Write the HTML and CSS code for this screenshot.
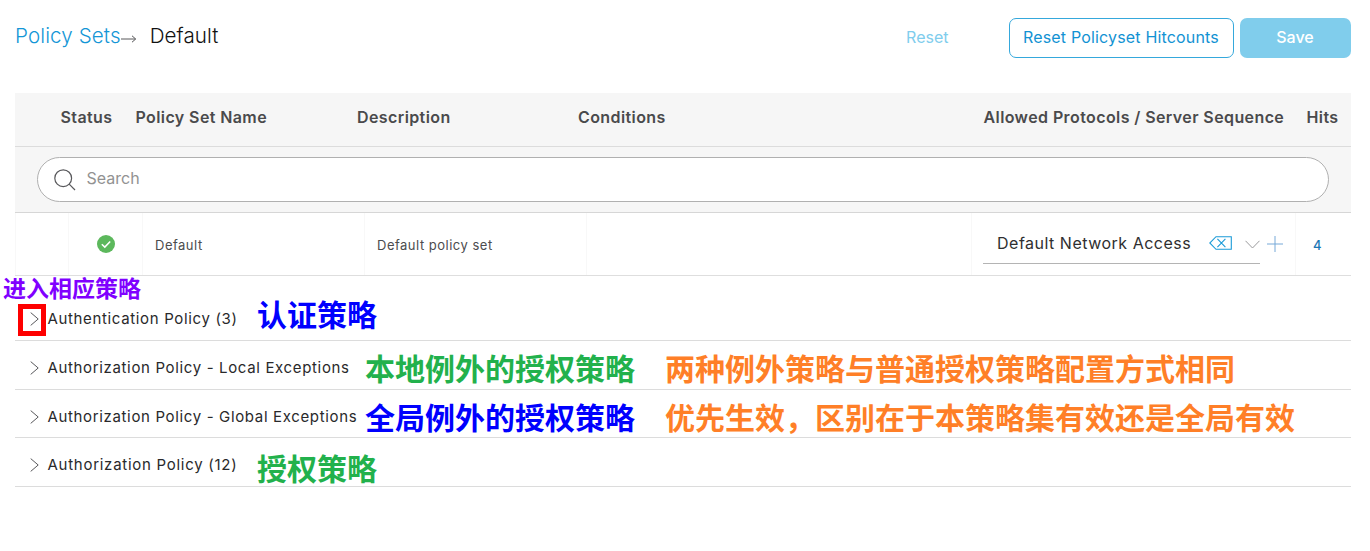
FILE: index.html
```html
<!DOCTYPE html>
<html lang="zh-CN">
<head>
<meta charset="utf-8">
<title>Policy Sets</title>
<link rel="stylesheet" href="styles.css">
</head>
<body>
<main class="page">
  <header class="topbar">
    <nav class="crumbs">
      <a class="crumb-link">Policy Sets</a>
      <svg class="crumb-arrow" width="16" height="8" viewBox="0 0 16 8"><path d="M0 4H14.5M11 .8L14.7 4L11 7.2"/></svg>
      <span class="crumb-current">Default</span>
    </nav>
    <div class="actions">
      <span class="reset">Reset</span>
      <button class="btn outline"><span>Reset Policyset Hitcounts</span></button>
      <button class="btn primary"><span>Save</span></button>
    </div>
  </header>

  <section class="table">
    <div class="thead">
      <span></span><span>Status</span><span>Policy Set Name</span><span>Description</span><span>Conditions</span><span>Allowed Protocols / Server Sequence</span><span>Hits</span>
    </div>
    <div class="search-row">
      <div class="search">
        <svg width="22" height="22" viewBox="0 0 22 22"><circle cx="9.2" cy="9.2" r="8.4"/><path d="M15.2 15.2L21 21"/></svg>
        <span>Search</span>
      </div>
    </div>
    <div class="trow">
      <div class="cell"></div>
      <div class="cell status"><svg width="18" height="18" viewBox="0 0 18 18"><circle cx="9" cy="9" r="9"/><path d="M4.8 9.2L7.8 12.1L13.2 6.5"/></svg></div>
      <div class="cell text"><span>Default</span></div>
      <div class="cell text"><span>Default policy set</span></div>
      <div class="cell"></div>
      <div class="cell access">
        <div class="select">
          <span>Default Network Access</span>
          <svg class="clear" width="23" height="14" viewBox="0 0 23 14"><path d="M7 .7H22.3V13.3H7L.8 7ZM8.4 2.8L16.4 11.2M16.4 2.8L8.4 11.2"/></svg>
          <svg class="caret" width="15" height="9" viewBox="0 0 15 9"><path d="M.5 .8L7.5 8L14.5 .8"/></svg>
        </div>
        <svg class="plus" width="16" height="16" viewBox="0 0 16 16"><path d="M8 0V16M0 8H16"/></svg>
      </div>
      <div class="cell hits"><span>4</span></div>
    </div>
  </section>

  <section class="policies">
    <div class="policy first">
      <svg width="9" height="14" viewBox="0 0 9 14"><path d="M.7 .6L8.2 7L.7 13.4"/></svg>
      <span class="label">Authentication Policy (3)</span>
      <span class="frame"></span>
      <span class="note small violet">进入相应策略</span>
      <span class="note blue near">认证策略</span>
    </div>
    <div class="policy">
      <svg width="9" height="14" viewBox="0 0 9 14"><path d="M.7 .6L8.2 7L.7 13.4"/></svg>
      <span class="label">Authorization Policy - Local Exceptions</span>
      <span class="note green mid">本地例外的授权策略</span>
      <span class="note orange far">两种例外策略与普通授权策略配置方式相同</span>
    </div>
    <div class="policy">
      <svg width="9" height="14" viewBox="0 0 9 14"><path d="M.7 .6L8.2 7L.7 13.4"/></svg>
      <span class="label">Authorization Policy - Global Exceptions</span>
      <span class="note blue mid">全局例外的授权策略</span>
      <span class="note orange far">优先生效，区别在于本策略集有效还是全局有效</span>
    </div>
    <div class="policy last">
      <svg width="9" height="14" viewBox="0 0 9 14"><path d="M.7 .6L8.2 7L.7 13.4"/></svg>
      <span class="label">Authorization Policy (12)</span>
      <span class="note green near">授权策略</span>
    </div>
  </section>
</main>
</body>
</html>
```
FILE: styles.css
```css
* { box-sizing: border-box; }
body { margin: 0; background: #fff; font-family: Inter, "Noto Sans CJK SC", sans-serif; color: #2f2f30; }
svg { display: block; flex: none; fill: none; }
.page { width: 1370px; height: 551px; padding: 0 19.5px 0 15px; overflow: hidden; }
.topbar { height: 93px; display: flex; justify-content: space-between; align-items: flex-start; }
.crumbs { display: flex; align-items: center; padding-top: 23px; font-size: 20.6px; line-height: 26px; font-weight: 300; letter-spacing: .1px; white-space: nowrap; }
.crumb-link { color: #1496d6; }
.crumb-arrow { stroke: #58585b; stroke-width: 1; margin: 5px 13px 0 0; }
.crumb-current { color: #111; }
.actions { display: flex; align-items: center; padding-top: 17.5px; }
.actions span { position: relative; top: -1px; }
.reset { color: #80cded; font-size: 16px; line-height: 20px; margin-right: 60px; }
.btn { height: 40px; border-radius: 7px; padding: 0; font: 400 16px/20px Inter, sans-serif; text-align: center; white-space: nowrap; }
.outline { width: 225px; background: #fff; border: 1px solid #35a8dc; color: #1292d3; margin-right: 6px; letter-spacing: .17px; }
.primary { width: 111px; background: #80cdec; border: 0; color: #fff; font-weight: 500; }

.thead { display: grid; grid-template-columns: 45.5px 75px 221.5px 221px 405.5px 323px 1fr; align-items: center; height: 54px; padding-bottom: 5px; background: #f6f6f6; border-bottom: 1.5px solid #dcdcdc; font-size: 16px; font-weight: 600; letter-spacing: .4px; color: #4a4a4c; white-space: nowrap; }
.search-row { height: 66px; padding: 10px 22px 0 22px; background: #f6f6f6; border-bottom: 1px solid #d6d6d6; }
.search { height: 45px; display: flex; align-items: center; gap: 11px; padding: 0 15.5px 3px; background: #fff; border: 1px solid #b0b0b0; border-radius: 23px; color: #929292; font-size: 16px; }
.search svg { stroke: #58585b; stroke-width: 1.2; margin-top: 3px; }
.trow { display: grid; grid-template-columns: 53px 74px 222px 222px 385px 324px 1fr; height: 63px; border-bottom: 1px solid #dedede; }
.cell { display: flex; align-items: center; border-left: 1px solid #f8f8f8; white-space: nowrap; }
.status svg { margin-left: 28px; fill: #5cb85c; }
.status path { fill: none; stroke: #fff; stroke-width: 1.5; }
.text { padding: 1px 0 0 12px; font-size: 13px; letter-spacing: .5px; color: #4c4c4e; }
.access { align-items: flex-start; padding: 16px 0 0 11px; }
.select { width: 277px; height: 35px; display: flex; align-items: center; padding: 0 0 7px 14px; border-bottom: 1px solid #b4b4b4; font-size: 16px; letter-spacing: .5px; }
.clear { stroke: #1b9bd8; stroke-width: 1.1; margin-left: auto; }
.caret { stroke: #9a9a9c; stroke-width: 1; margin: 3px 0 0 13px; }
.plus { stroke: #76a9d8; stroke-width: 1; margin: 7px 0 0 7px; }
.hits { padding: 1px 0 0 17px; font-size: 13px; font-weight: 500; color: #1b77b5; }

.policy { position: relative; height: 48.7px; display: flex; align-items: center; gap: 9px; padding: 5px 0 0 14.5px; border-bottom: 1px solid #dcdcdc; white-space: nowrap; }
.policy > svg { stroke: #58585b; stroke-width: 1; margin-top: 1px; }
.first { height: 65px; padding-top: 21px; }
.label { font-size: 15px; letter-spacing: .65px; color: #29292b; }
.last .label { letter-spacing: .73px; }
.note { position: absolute; font: 700 30px/36px "Noto Sans CJK SC", sans-serif; top: 8.4px; }
.near { left: 242px; }
.mid { left: 350px; }
.far { left: 650px; }
.first .near { top: 19px; }
.last .near { top: 10.4px; }
.first .small { font-size: 23px; line-height: 28px; left: -12px; top: -3px; }
.violet { color: #8000ff; }
.blue { color: #0000fe; }
.green { color: #22b14c; }
.orange { color: #ff7f27; }
.frame { position: absolute; left: 3px; top: 28px; width: 28px; height: 32px; border: 5px solid #fe0000; }
```
